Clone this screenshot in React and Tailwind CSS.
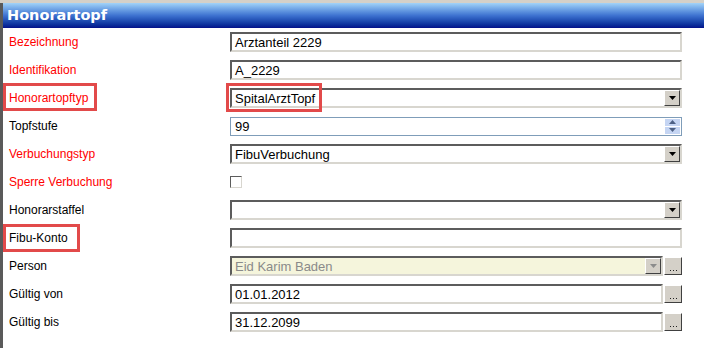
const rows = [
    { label: "Bezeichnung", red: true, kind: "text", value: "Arztanteil 2229" },
    { label: "Identifikation", red: true, kind: "text", value: "A_2229" },
    { label: "Honorartopftyp", red: true, kind: "select", value: "SpitalArztTopf" },
    { label: "Topfstufe", kind: "spin", value: "99" },
    { label: "Verbuchungstyp", red: true, kind: "select", value: "FibuVerbuchung" },
    { label: "Sperre Verbuchung", red: true, kind: "check" },
    { label: "Honorarstaffel", kind: "select", value: "" },
    { label: "Fibu-Konto", kind: "text", value: "" },
    { label: "Person", kind: "lookup", value: "Eid Karim Baden" },
    { label: "Gültig von", kind: "date", value: "01.01.2012" },
    { label: "Gültig bis", kind: "date", value: "31.12.2099" },
];

const inset = "border-2 border-t-[#5c5c5c] border-l-[#5c5c5c] border-b-[#d8d6cf] border-r-[#d8d6cf]";

function DropButton({ disabled }) {
    return (
        <div className="flex h-[16px] w-[16px] shrink-0 items-center justify-center border border-t-white border-l-white border-b-[#404040] border-r-[#404040] bg-[#d4d0c8]">
            <svg width="7" height="4" viewBox="0 0 7 4">
                <path d="M0 0h7L3.5 4z" fill={disabled ? "#8c8c8c" : "#000"} />
            </svg>
        </div>
    );
}

function DotsButton() {
    return (
        <div className="ml-[1px] flex h-[18px] w-[18px] shrink-0 items-end justify-center border border-t-white border-l-white border-b-[#404040] border-r-[#404040] bg-[#d4d0c8] pb-[3px]">
            <div className="flex gap-[2px]">
                <span className="h-[1px] w-[1px] bg-[#222]" />
                <span className="h-[1px] w-[1px] bg-[#222]" />
                <span className="h-[1px] w-[1px] bg-[#222]" />
            </div>
        </div>
    );
}

function Field({ row }) {
    if (row.kind === "check") {
        return <div className={`h-[12px] w-[12px] bg-white ${inset} border-[1px]`} />;
    }
    if (row.kind === "spin") {
        return (
            <div className="flex h-[19px] w-[452px] items-center border border-[#7f9db9] bg-white">
                <span className="flex-1 pl-[4px] text-[13px] leading-none">{row.value}</span>
                <div className="mr-[1px] flex flex-col gap-[1px]">
                    <div className="flex h-[7px] w-[15px] items-center justify-center bg-[#c5d5f3]">
                        <svg width="7" height="4" viewBox="0 0 7 4"><path d="M0 4h7L3.5 0z" fill="#4d6185" /></svg>
                    </div>
                    <div className="flex h-[7px] w-[15px] items-center justify-center bg-[#c5d5f3]">
                        <svg width="7" height="4" viewBox="0 0 7 4"><path d="M0 0h7L3.5 4z" fill="#4d6185" /></svg>
                    </div>
                </div>
            </div>
        );
    }
    if (row.kind === "select") {
        return (
            <div className={`flex h-[20px] w-[452px] items-center bg-white ${inset}`}>
                <span className="flex-1 pl-[3px] text-[13px] leading-none">{row.value}</span>
                <DropButton />
            </div>
        );
    }
    if (row.kind === "lookup") {
        return (
            <div className="flex w-[452px] items-center">
                <div className={`flex h-[20px] w-[434px] items-center bg-[#f5f5dc] ${inset}`}>
                    <span className="flex-1 pl-[3px] text-[13px] leading-none text-[#8a8a8a]">{row.value}</span>
                    <DropButton disabled />
                </div>
                <DotsButton />
            </div>
        );
    }
    if (row.kind === "date") {
        return (
            <div className="flex w-[452px] items-center">
                <div className={`flex h-[20px] w-[434px] items-center bg-white ${inset}`}>
                    <span className="pl-[3px] text-[13px] leading-none">{row.value}</span>
                </div>
                <DotsButton />
            </div>
        );
    }
    return (
        <div className={`flex h-[20px] w-[452px] items-center bg-white ${inset}`}>
            <span className="pl-[3px] text-[13px] leading-none">{row.value}</span>
        </div>
    );
}

export default function App() {
    return (
        <div className="relative h-[348px] w-[704px] overflow-hidden bg-[#d4d0c8] pt-[3px] font-['Liberation_Sans',Arial,sans-serif]">
            <div className="h-full border-l-[3px] border-[#5a5a5a] bg-white">
                <div className="flex h-[25px] items-center bg-gradient-to-b from-[#a2d3f8] via-[#3e72d0] to-[#06108a] pl-[4px]">
                    <span className="font-['DejaVu_Sans',sans-serif] text-[14.5px] font-bold text-white">Honorartopf</span>
                </div>
                <div className="flex flex-col">
                    {rows.map((row) => (
                        <div key={row.label} className="flex h-[28px] items-center">
                            <div className={`w-[227px] pl-[6px] text-[12px] ${row.red ? "text-[#ff0000]" : "text-black"}`}>
                                {row.label}
                            </div>
                            <Field row={row} />
                        </div>
                    ))}
                </div>
            </div>

            {/* annotation boxes */}
            <div className="absolute left-[3px] top-[83px] h-[28px] w-[94px] border-[3px] border-[#e24a4a]" />
            <div className="absolute left-[226px] top-[83px] h-[29px] w-[96px] border-[3px] border-[#e24a4a]" />
            <div className="absolute left-[3px] top-[224px] h-[28px] w-[77px] border-[3px] border-[#e24a4a]" />
        </div>
    );
}
